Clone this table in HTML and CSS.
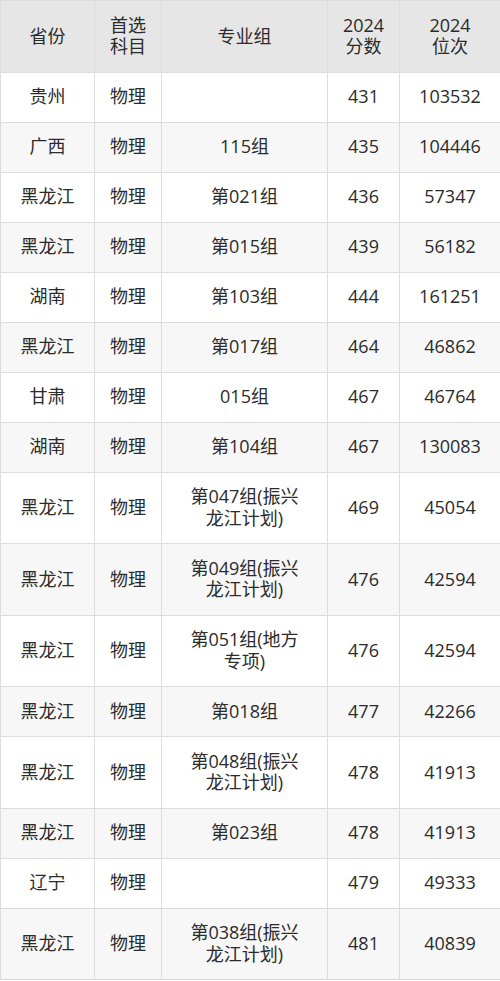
FILE: index.html
```html
<!DOCTYPE html>
<html lang="zh-CN">
<head>
<meta charset="utf-8">
<title>录取分数</title>
<link rel="stylesheet" href="styles.css">
</head>
<body>
<table class="score-table">
  <colgroup>
    <col class="c-prov"><col class="c-subj"><col class="c-group"><col class="c-score"><col class="c-rank">
  </colgroup>
  <thead>
    <tr><th>省份</th><th>首选<br>科目</th><th>专业组</th><th>2024<br>分数</th><th>2024<br>位次</th></tr>
  </thead>
  <tbody>
    <tr><td>贵州</td><td>物理</td><td></td><td>431</td><td>103532</td></tr>
    <tr><td>广西</td><td>物理</td><td>115组</td><td>435</td><td>104446</td></tr>
    <tr><td>黑龙江</td><td>物理</td><td>第021组</td><td>436</td><td>57347</td></tr>
    <tr><td>黑龙江</td><td>物理</td><td>第015组</td><td>439</td><td>56182</td></tr>
    <tr><td>湖南</td><td>物理</td><td>第103组</td><td>444</td><td>161251</td></tr>
    <tr><td>黑龙江</td><td>物理</td><td>第017组</td><td>464</td><td>46862</td></tr>
    <tr><td>甘肃</td><td>物理</td><td>015组</td><td>467</td><td>46764</td></tr>
    <tr><td>湖南</td><td>物理</td><td>第104组</td><td>467</td><td>130083</td></tr>
    <tr><td>黑龙江</td><td>物理</td><td>第047组(振兴<br>龙江计划)</td><td>469</td><td>45054</td></tr>
    <tr><td>黑龙江</td><td>物理</td><td>第049组(振兴<br>龙江计划)</td><td>476</td><td>42594</td></tr>
    <tr><td>黑龙江</td><td>物理</td><td>第051组(地方<br>专项)</td><td>476</td><td>42594</td></tr>
    <tr><td>黑龙江</td><td>物理</td><td>第018组</td><td>477</td><td>42266</td></tr>
    <tr><td>黑龙江</td><td>物理</td><td>第048组(振兴<br>龙江计划)</td><td>478</td><td>41913</td></tr>
    <tr><td>黑龙江</td><td>物理</td><td>第023组</td><td>478</td><td>41913</td></tr>
    <tr><td>辽宁</td><td>物理</td><td></td><td>479</td><td>49333</td></tr>
    <tr><td>黑龙江</td><td>物理</td><td>第038组(振兴<br>龙江计划)</td><td>481</td><td>40839</td></tr>
  </tbody>
</table>
</body>
</html>
```

FILE: styles.css
```css
html, body {
  margin: 0;
  padding: 0;
  background: #ffffff;
}

.score-table {
  width: 500px;
  border-collapse: collapse;
  table-layout: fixed;
  font-family: "Open Sans", "Noto Sans CJK SC", sans-serif;
  font-size: 18px;
  line-height: 21.5px;
  color: #2b2b2b;
}

.c-prov { width: 94px; }
.c-subj { width: 67px; }
.c-group { width: 166px; }
.c-score { width: 72px; }
.c-rank { width: 101px; }

.score-table th,
.score-table td {
  border: 1px solid #dcdcdc;
  padding: 13.75px 2px;
  text-align: center;
  vertical-align: middle;
  font-weight: normal;
}

.score-table thead th {
  background: #e6e6e6;
}

.score-table tbody tr:nth-child(even) td {
  background: #f7f7f7;
}
```
